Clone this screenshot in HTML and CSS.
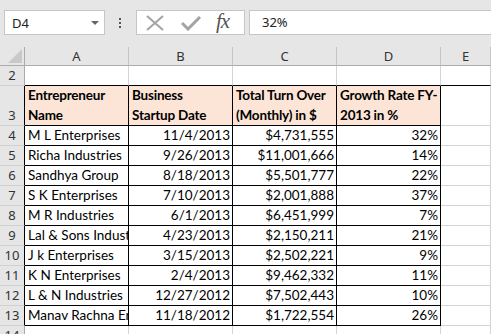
FILE: index.html
```html
<!DOCTYPE html>
<html lang="en">
<head>
  <meta charset="UTF-8">
  <title>Sheet1</title>
  <link rel="stylesheet" href="styles.css">
</head>
<body>
  <div class="toolbar">
    <div class="namebox">
      <span>D4</span>
      <svg class="caret" width="8" height="4" viewBox="0 0 8 4"><polygon points="0,0 8,0 4,4" fill="#666"/></svg>
    </div>
    <div class="grip">
      <svg width="3" height="11" viewBox="0 0 3 11">
        <rect x="0" y="0" width="2" height="2" fill="#555"/>
        <rect x="0" y="4" width="2" height="2" fill="#555"/>
        <rect x="0" y="8" width="2" height="2" fill="#555"/>
      </svg>
    </div>
    <div class="fxbox">
      <svg class="cancel" width="18" height="16" viewBox="0 0 18 16">
        <path d="M1 1 L17 15 M17 1 L1 15" stroke="#a3a3a3" stroke-width="2" fill="none"/>
      </svg>
      <svg class="enter" width="20" height="16" viewBox="0 0 20 16">
        <path d="M1 8 L7 14 L19 2" stroke="#a3a3a3" stroke-width="3" fill="none"/>
      </svg>
      <span class="fx">fx</span>
    </div>
    <div class="formula">32%</div>
  </div>

  <table class="sheet">
    <colgroup>
      <col class="c-head">
      <col class="c-std">
      <col class="c-std">
      <col class="c-std">
      <col class="c-std">
      <col>
    </colgroup>
    <thead>
      <tr>
        <th class="corner"><svg width="14" height="14" viewBox="0 0 14 14"><polygon points="14,0 14,14 0,14" fill="#c9c9c9"/></svg></th>
        <th>A</th>
        <th>B</th>
        <th>C</th>
        <th>D</th>
        <th>E</th>
      </tr>
    </thead>
    <tbody class="rows">
      <tr class="top">
        <td class="rn">2</td>
        <td></td><td></td><td></td><td></td><td></td>
      </tr>
      <tr class="titles">
        <td class="rn">3</td>
        <td class="in">Entrepreneur<br>Name</td>
        <td class="in">Business<br>Startup Date</td>
        <td class="in">Total Turn Over<br>(Monthly) in $</td>
        <td class="in">Growth Rate FY-<br>2013 in %</td>
        <td></td>
      </tr>
    </tbody>
  </table>

  <script>
    var data = [
      ["M L Enterprises", "11/4/2013", "$4,731,555", "32%"],
      ["Richa Industries", "9/26/2013", "$11,001,666", "14%"],
      ["Sandhya Group", "8/18/2013", "$5,501,777", "22%"],
      ["S K Enterprises", "7/10/2013", "$2,001,888", "37%"],
      ["M R Industries", "6/1/2013", "$6,451,999", "7%"],
      ["Lal & Sons Industries", "4/23/2013", "$2,150,211", "21%"],
      ["J k Enterprises", "3/15/2013", "$2,502,221", "9%"],
      ["K N Enterprises", "2/4/2013", "$9,462,332", "11%"],
      ["L & N Industries", "12/27/2012", "$7,502,443", "10%"],
      ["Manav Rachna Enterprises", "11/18/2012", "$1,722,554", "26%"]
    ];
    var rows = document.querySelector(".rows");
    data.forEach(function (d, i) {
      rows.innerHTML += '<tr>' +
        '<td class="rn in-edge">' + (i + 4) + '</td>' +
        '<td class="in">' + d[0].replace(/&/g, '&amp;') + '</td>' +
        '<td class="in num">' + d[1] + '</td>' +
        '<td class="in num">' + d[2] + '</td>' +
        '<td class="in num">' + d[3] + '</td>' +
        '<td></td>' +
        '</tr>';
    });
    rows.innerHTML += '<tr><td class="rn">14</td><td></td><td></td><td></td><td></td><td></td></tr>';
  </script>
</body>
</html>
```

FILE: styles.css
```css
body {
  margin: 0;
  background-color: #e6e6e6;
  font-family: "Lato", "Liberation Sans", sans-serif;
  overflow: hidden;
}
.toolbar {
  display: flex;
  align-items: flex-start;
  height: 37px;
  padding: 10px 0 0 4px;
}
.namebox {
  box-sizing: border-box;
  width: 101px;
  height: 25px;
  background: #fff;
  border: 1px solid #c6c6c6;
  display: flex;
  align-items: center;
  justify-content: space-between;
  padding: 0 5px 0 7px;
  font-family: "Noto Sans", sans-serif;
  font-size: 13px;
  color: #222;
}
.caret {
  margin-top: 1px;
}
.grip {
  width: 31px;
  height: 25px;
  display: flex;
  align-items: center;
  justify-content: center;
  padding-top: 1px;
  box-sizing: border-box;
}
.fxbox {
  box-sizing: border-box;
  width: 109px;
  height: 25px;
  background: #fff;
  border: 1px solid #c6c6c6;
  display: flex;
  align-items: center;
  padding-left: 9px;
}
.cancel {
  margin-right: 17px;
}
.enter {
  margin-top: 1px;
  margin-right: 15px;
}
.fx {
  font-family: "Liberation Serif", serif;
  font-style: italic;
  font-size: 21px;
  color: #555;
  margin-top: -3px;
  letter-spacing: -1px;
}
.formula {
  box-sizing: border-box;
  flex: 1;
  height: 25px;
  margin-left: 4px;
  background: #fff;
  border: 1px solid #c6c6c6;
  border-right: none;
  padding-left: 12px;
  font-family: "Noto Sans", sans-serif;
  font-size: 13px;
  line-height: 23px;
  color: #222;
}

.sheet {
  table-layout: fixed;
  border-collapse: separate;
  border-spacing: 0;
  width: 491px;
  background: #fff;
}
.c-head {
  width: 25px;
}
.c-std {
  width: 104px;
}
.sheet th {
  height: 18px;
  padding: 0;
  background: #e6e6e6;
  border-right: 1px solid #c4c4c4;
  border-bottom: 1px solid #ababab;
  font-family: "Noto Sans", sans-serif;
  font-weight: normal;
  font-size: 13px;
  color: #333;
  text-align: center;
}
.sheet th.corner {
  border-right: 1px solid #ababab;
  text-align: right;
  vertical-align: bottom;
  line-height: 0;
}
.corner svg {
  margin: 0 2px 2px 0;
}
.sheet td {
  height: 19px;
  padding: 0 2px 0 3px;
  border-right: 1px solid #d4d4d4;
  border-bottom: 1px solid #d4d4d4;
  font-size: 13.5px;
  line-height: 19px;
  color: #000;
  white-space: nowrap;
  overflow: hidden;
  vertical-align: bottom;
}
.sheet td.rn {
  padding: 0;
  background: #e6e6e6;
  border-right: 1px solid #ababab;
  border-bottom: 1px solid #d0d0d0;
  font-family: "Noto Sans", sans-serif;
  font-size: 13px;
  color: #333;
  text-align: center;
}
.top td {
  border-bottom-color: #000;
}
.top td.rn {
  border-bottom-color: #d0d0d0;
}
.titles td {
  height: 39px;
}
.titles td.in {
  background: #fce4d6;
  font-weight: bold;
  line-height: 19.5px;
  letter-spacing: -0.2px;
}
.sheet td.in {
  border-right-color: #000;
  border-bottom-color: #000;
}
.titles td.rn,
.sheet td.in-edge {
  border-right-color: #000;
}
.num {
  text-align: right;
}
```
